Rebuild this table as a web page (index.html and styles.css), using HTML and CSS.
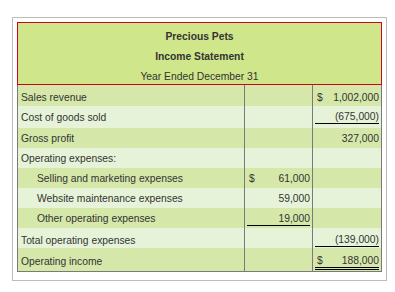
FILE: index.html
```html
<!DOCTYPE html>
<html>
<head>
<meta charset="utf-8">
<link rel="stylesheet" href="styles.css">
</head>
<body>
<div class="panel">
  <div class="head">
    <p class="title">Precious Pets</p>
    <p class="title">Income Statement</p>
    <p class="sub">Year Ended December 31</p>
  </div>
  <table class="stmt">
    <colgroup><col class="c-label"><col class="c-mid"><col class="c-tot"></colgroup>
    <tr class="dark r1">
      <td class="lbl">Sales revenue</td><td class="amt"></td>
      <td class="amt"><div class="fig"><span>$</span><span>1,002,000</span></div></td>
    </tr>
    <tr class="light r2">
      <td class="lbl">Cost of goods sold</td><td class="amt"></td>
      <td class="amt"><div class="fig end ul">(675,000)</div></td>
    </tr>
    <tr class="dark r3">
      <td class="lbl">Gross profit</td><td class="amt"></td>
      <td class="amt"><div class="fig end">327,000</div></td>
    </tr>
    <tr class="light r4">
      <td class="lbl">Operating expenses:</td><td class="amt"></td><td class="amt"></td>
    </tr>
    <tr class="dark r5">
      <td class="lbl ind">Selling and marketing expenses</td>
      <td class="amt"><div class="fig"><span>$</span><span>61,000</span></div></td><td class="amt"></td>
    </tr>
    <tr class="light r6">
      <td class="lbl ind">Website maintenance expenses</td>
      <td class="amt"><div class="fig end">59,000</div></td><td class="amt"></td>
    </tr>
    <tr class="dark r7">
      <td class="lbl ind">Other operating expenses</td>
      <td class="amt"><div class="fig end ul">19,000</div></td><td class="amt"></td>
    </tr>
    <tr class="light r8">
      <td class="lbl">Total operating expenses</td><td class="amt"></td>
      <td class="amt"><div class="fig end ul">(139,000)</div></td>
    </tr>
    <tr class="dark r9">
      <td class="lbl">Operating income</td><td class="amt"></td>
      <td class="amt"><div class="fig dbl"><span>$</span><span>188,000</span></div></td>
    </tr>
  </table>
</div>
</body>
</html>
```

FILE: styles.css
```css
html, body {
  margin: 0;
  padding: 0;
  background: #fff;
}
body {
  font-family: "Liberation Sans", Arial, sans-serif;
  font-size: 10.3px;
  color: #333;
}
.panel {
  margin: 17px 0 0 12px;
  width: 365px;
  border: 1px solid #bcbcbc;
  padding: 4px 4px 8px 4px;
}
.head {
  background: #d0e68a;
  border: 1px solid #d0021b;
  text-align: center;
  padding: 4px 0 0 0;
  height: 57px;
}
.head p {
  margin: 0;
  line-height: 20px;
}
.head .title {
  font-weight: bold;
}
.stmt {
  border-collapse: collapse;
  width: 365px;
  table-layout: fixed;
}
.c-label { width: 227px; }
.c-mid { width: 68px; }
.c-tot { width: 69px; }
.stmt td {
  border-left: 1px solid #7a7a7a;
  border-right: 1px solid #7a7a7a;
  padding: 0 0 3px 0;
  line-height: 12px;
  vertical-align: bottom;
}
.stmt tr { height: 20px; }
.stmt tr.r1 { height: 21px; }
.stmt tr.r2 { height: 22px; }
.stmt tr.r9 { height: 23px; }
.stmt tr.r9 td {
  border-bottom: 1px solid #7a7a7a;
}
.dark { background: #d5e8aa; }
.light { background: #e7f3d8; }
.stmt td.lbl {
  padding-left: 3px;
  white-space: nowrap;
}
.stmt td.lbl.ind {
  padding-left: 19px;
}
.stmt td.amt {
  padding-left: 2px;
  padding-right: 2px;
}
.stmt tr.r1 td { padding-bottom: 2px; }
.stmt tr.r2 td.amt { padding-bottom: 4px; }
.stmt tr.r2 td.lbl { padding-bottom: 4px; }
.stmt tr.r7 td.amt { padding-bottom: 2px; }
.stmt tr.r7 td.lbl { padding-bottom: 3px; }
.stmt tr.r8 td.amt { padding-bottom: 1px; }
.stmt tr.r8 td.lbl { padding-bottom: 1px; }
.stmt tr.r9 td.amt { padding-bottom: 1px; }
.stmt tr.r9 td.lbl { padding-bottom: 3px; }
.fig {
  display: flex;
  justify-content: space-between;
  padding-left: 2px;
}
.fig.end {
  justify-content: flex-end;
}
.fig.ul {
  border-bottom: 1px solid #000;
}
.fig.dbl {
  border-bottom: 3px double #000;
}
```
